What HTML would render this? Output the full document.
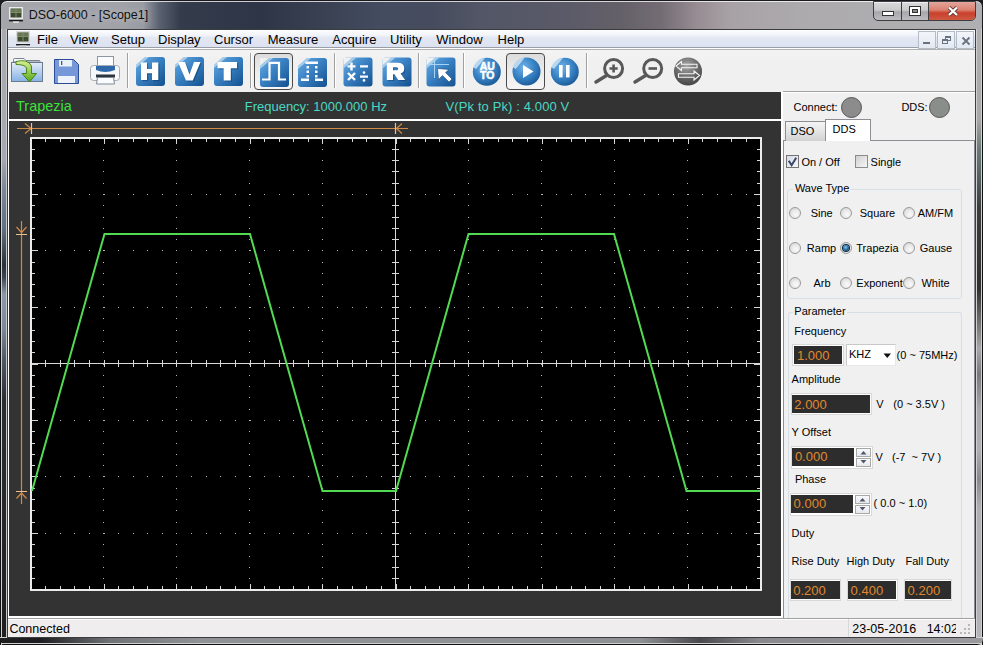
<!DOCTYPE html>
<html><head><meta charset="utf-8">
<style>
*{box-sizing:border-box;margin:0;padding:0}
html,body{width:983px;height:645px;overflow:hidden;background:#1c1e24}
body{position:relative;font-family:"Liberation Sans",sans-serif;color:#000}
.a{position:absolute}
.t{position:absolute;white-space:nowrap;line-height:1}
#frame{left:0;top:0;width:983px;height:645px;border-radius:7px 7px 0 0;border:1px solid #1a1a1e;box-shadow:inset 0 1px rgba(255,255,255,.75);
 background:linear-gradient(to right,#a4a6ac 0,#a0a2a8 120px,#9a9ca4 142px,#5a6272 158px,#343c4c 180px,#2e3546 260px,#3a4254 330px,#444c60 380px,#464c5e 430px,#525666 480px,#5a5a68 560px,#646068 620px,#746c74 660px,#968c92 695px,#a8a2a6 730px,#acaaac 800px,#b0b0b2 983px)}
#frameL{left:0;top:29px;width:8px;height:616px;border-left:1px solid #101010;background:linear-gradient(to right,#d0d0d2 0,#d0d0d2 1px,transparent 1px,transparent 5px,#c8c8ca 5px,#c8c8ca 6px,#202020 6px),linear-gradient(to bottom,#a8acb2 0,#a4a8b0 130px,#7a8898 160px,#607080 200px,#2a323a 236px,#3a4450 248px,#8a98a8 265px,#7a8898 300px,#505a66 330px,#2a2e34 370px,#1e1e20 616px)}
#frameR{left:975px;top:29px;width:8px;height:616px;background:linear-gradient(to right,#303030 0,#303030 1px,#d0d0d0 1px,#d0d0d0 2px,transparent 2px,transparent 6px,#d0d0d0 6px,#d0d0d0 7px,#101010 7px),linear-gradient(to bottom,#b0b0b2 0,#a8a8aa 90px,#6a7a78 120px,#5a6a68 140px,#3a3c3e 180px,#2e3032 260px,#6a6a6c 290px,#a8a8ac 320px,#7a7a7e 345px,#a8a8ac 380px,#b0b0b4 420px,#8a8a8e 450px,#b0b0b4 480px,#b4b4b8 616px)}
#frameB{left:0;top:637px;width:983px;height:8px;border-radius:0 0 6px 6px;background:linear-gradient(to bottom,#d0d0d0 0,#d0d0d0 1px,transparent 1px,transparent 6px,#d0d0d0 6px,#d0d0d0 7px,#101010 7px),linear-gradient(to right,#1e1e20 0,#1e1e20 40px,#707276 110px,#909296 200px,#8e9094 640px,#4a4a4e 700px,#8a8a8e 760px,#9a9a9e 983px)}
#client{left:7px;top:29px;width:969px;height:609px;background:#f0f0f0;border:1px solid #3c3c3c}
#menubar{left:8px;top:30px;width:967px;height:18px;background:linear-gradient(to bottom,#fcfdfe 0,#f2f4fa 30%,#e2e7f2 45%,#dce2f0 100%);border-bottom:1px solid #9a9ea6}
#toolbar{left:8px;top:48px;width:967px;height:44px;background:linear-gradient(#f4f4f4,#f0f0f0 30%);border-top:1px solid #fff;box-shadow:inset 0 1px #b0b0b0}

#scope{left:8px;top:92px;width:775px;height:526px;background:#fff}
#shead{left:9px;top:92px;width:772px;height:27px;background:#333}
#spanel{left:9px;top:121px;width:772px;height:495px;background:#333}
#rpanel{left:783px;top:91px;width:192px;height:527px;background:#f0f0f0;border-top:1px solid #a0a0a0}
#rpanel2{left:783px;top:92px;width:192px;height:1px;background:#fff}
#status{left:8px;top:618px;width:967px;height:19px;background:#efeded;border-top:1px solid #a0a0a0;box-shadow:inset 0 1px #fff}
</style></head><body>
<div class="a" id="frame"></div>
<div class="a" id="frameL"></div>
<div class="a" id="frameR"></div>
<div class="a" id="frameB"></div>
<div class="a" id="client"></div>
<div class="a" id="menubar"></div>
<div class="a" id="toolbar"></div>
<div class="a" id="scope"></div>
<div class="a" id="shead"></div>
<div class="a" id="spanel"></div>
<div class="a" id="rpanel"></div>
<div class="a" id="rpanel2"></div>
<div class="a" id="status"></div>
<svg class="a" style="left:0;top:0" width="983" height="645" viewBox="0 0 983 645" shape-rendering="crispEdges">
<rect x="32" y="139" width="728" height="450" fill="#000"/>
<path fill="#b8b8b8" d="M103 149h1v1h-1zM103 160h1v1h-1zM103 171h1v1h-1zM103 183h1v1h-1zM103 194h1v1h-1zM103 205h1v1h-1zM103 217h1v1h-1zM103 228h1v1h-1zM103 239h1v1h-1zM103 250h1v1h-1zM103 262h1v1h-1zM103 273h1v1h-1zM103 284h1v1h-1zM103 296h1v1h-1zM103 307h1v1h-1zM103 318h1v1h-1zM103 330h1v1h-1zM103 341h1v1h-1zM103 352h1v1h-1zM103 364h1v1h-1zM103 375h1v1h-1zM103 386h1v1h-1zM103 397h1v1h-1zM103 409h1v1h-1zM103 420h1v1h-1zM103 431h1v1h-1zM103 443h1v1h-1zM103 454h1v1h-1zM103 465h1v1h-1zM103 476h1v1h-1zM103 488h1v1h-1zM103 499h1v1h-1zM103 510h1v1h-1zM103 522h1v1h-1zM103 533h1v1h-1zM103 544h1v1h-1zM103 556h1v1h-1zM103 567h1v1h-1zM103 578h1v1h-1zM176 149h1v1h-1zM176 160h1v1h-1zM176 171h1v1h-1zM176 183h1v1h-1zM176 194h1v1h-1zM176 205h1v1h-1zM176 217h1v1h-1zM176 228h1v1h-1zM176 239h1v1h-1zM176 250h1v1h-1zM176 262h1v1h-1zM176 273h1v1h-1zM176 284h1v1h-1zM176 296h1v1h-1zM176 307h1v1h-1zM176 318h1v1h-1zM176 330h1v1h-1zM176 341h1v1h-1zM176 352h1v1h-1zM176 364h1v1h-1zM176 375h1v1h-1zM176 386h1v1h-1zM176 397h1v1h-1zM176 409h1v1h-1zM176 420h1v1h-1zM176 431h1v1h-1zM176 443h1v1h-1zM176 454h1v1h-1zM176 465h1v1h-1zM176 476h1v1h-1zM176 488h1v1h-1zM176 499h1v1h-1zM176 510h1v1h-1zM176 522h1v1h-1zM176 533h1v1h-1zM176 544h1v1h-1zM176 556h1v1h-1zM176 567h1v1h-1zM176 578h1v1h-1zM249 149h1v1h-1zM249 160h1v1h-1zM249 171h1v1h-1zM249 183h1v1h-1zM249 194h1v1h-1zM249 205h1v1h-1zM249 217h1v1h-1zM249 228h1v1h-1zM249 239h1v1h-1zM249 250h1v1h-1zM249 262h1v1h-1zM249 273h1v1h-1zM249 284h1v1h-1zM249 296h1v1h-1zM249 307h1v1h-1zM249 318h1v1h-1zM249 330h1v1h-1zM249 341h1v1h-1zM249 352h1v1h-1zM249 364h1v1h-1zM249 375h1v1h-1zM249 386h1v1h-1zM249 397h1v1h-1zM249 409h1v1h-1zM249 420h1v1h-1zM249 431h1v1h-1zM249 443h1v1h-1zM249 454h1v1h-1zM249 465h1v1h-1zM249 476h1v1h-1zM249 488h1v1h-1zM249 499h1v1h-1zM249 510h1v1h-1zM249 522h1v1h-1zM249 533h1v1h-1zM249 544h1v1h-1zM249 556h1v1h-1zM249 567h1v1h-1zM249 578h1v1h-1zM322 149h1v1h-1zM322 160h1v1h-1zM322 171h1v1h-1zM322 183h1v1h-1zM322 194h1v1h-1zM322 205h1v1h-1zM322 217h1v1h-1zM322 228h1v1h-1zM322 239h1v1h-1zM322 250h1v1h-1zM322 262h1v1h-1zM322 273h1v1h-1zM322 284h1v1h-1zM322 296h1v1h-1zM322 307h1v1h-1zM322 318h1v1h-1zM322 330h1v1h-1zM322 341h1v1h-1zM322 352h1v1h-1zM322 364h1v1h-1zM322 375h1v1h-1zM322 386h1v1h-1zM322 397h1v1h-1zM322 409h1v1h-1zM322 420h1v1h-1zM322 431h1v1h-1zM322 443h1v1h-1zM322 454h1v1h-1zM322 465h1v1h-1zM322 476h1v1h-1zM322 488h1v1h-1zM322 499h1v1h-1zM322 510h1v1h-1zM322 522h1v1h-1zM322 533h1v1h-1zM322 544h1v1h-1zM322 556h1v1h-1zM322 567h1v1h-1zM322 578h1v1h-1zM468 149h1v1h-1zM468 160h1v1h-1zM468 171h1v1h-1zM468 183h1v1h-1zM468 194h1v1h-1zM468 205h1v1h-1zM468 217h1v1h-1zM468 228h1v1h-1zM468 239h1v1h-1zM468 250h1v1h-1zM468 262h1v1h-1zM468 273h1v1h-1zM468 284h1v1h-1zM468 296h1v1h-1zM468 307h1v1h-1zM468 318h1v1h-1zM468 330h1v1h-1zM468 341h1v1h-1zM468 352h1v1h-1zM468 364h1v1h-1zM468 375h1v1h-1zM468 386h1v1h-1zM468 397h1v1h-1zM468 409h1v1h-1zM468 420h1v1h-1zM468 431h1v1h-1zM468 443h1v1h-1zM468 454h1v1h-1zM468 465h1v1h-1zM468 476h1v1h-1zM468 488h1v1h-1zM468 499h1v1h-1zM468 510h1v1h-1zM468 522h1v1h-1zM468 533h1v1h-1zM468 544h1v1h-1zM468 556h1v1h-1zM468 567h1v1h-1zM468 578h1v1h-1zM541 149h1v1h-1zM541 160h1v1h-1zM541 171h1v1h-1zM541 183h1v1h-1zM541 194h1v1h-1zM541 205h1v1h-1zM541 217h1v1h-1zM541 228h1v1h-1zM541 239h1v1h-1zM541 250h1v1h-1zM541 262h1v1h-1zM541 273h1v1h-1zM541 284h1v1h-1zM541 296h1v1h-1zM541 307h1v1h-1zM541 318h1v1h-1zM541 330h1v1h-1zM541 341h1v1h-1zM541 352h1v1h-1zM541 364h1v1h-1zM541 375h1v1h-1zM541 386h1v1h-1zM541 397h1v1h-1zM541 409h1v1h-1zM541 420h1v1h-1zM541 431h1v1h-1zM541 443h1v1h-1zM541 454h1v1h-1zM541 465h1v1h-1zM541 476h1v1h-1zM541 488h1v1h-1zM541 499h1v1h-1zM541 510h1v1h-1zM541 522h1v1h-1zM541 533h1v1h-1zM541 544h1v1h-1zM541 556h1v1h-1zM541 567h1v1h-1zM541 578h1v1h-1zM614 149h1v1h-1zM614 160h1v1h-1zM614 171h1v1h-1zM614 183h1v1h-1zM614 194h1v1h-1zM614 205h1v1h-1zM614 217h1v1h-1zM614 228h1v1h-1zM614 239h1v1h-1zM614 250h1v1h-1zM614 262h1v1h-1zM614 273h1v1h-1zM614 284h1v1h-1zM614 296h1v1h-1zM614 307h1v1h-1zM614 318h1v1h-1zM614 330h1v1h-1zM614 341h1v1h-1zM614 352h1v1h-1zM614 364h1v1h-1zM614 375h1v1h-1zM614 386h1v1h-1zM614 397h1v1h-1zM614 409h1v1h-1zM614 420h1v1h-1zM614 431h1v1h-1zM614 443h1v1h-1zM614 454h1v1h-1zM614 465h1v1h-1zM614 476h1v1h-1zM614 488h1v1h-1zM614 499h1v1h-1zM614 510h1v1h-1zM614 522h1v1h-1zM614 533h1v1h-1zM614 544h1v1h-1zM614 556h1v1h-1zM614 567h1v1h-1zM614 578h1v1h-1zM687 149h1v1h-1zM687 160h1v1h-1zM687 171h1v1h-1zM687 183h1v1h-1zM687 194h1v1h-1zM687 205h1v1h-1zM687 217h1v1h-1zM687 228h1v1h-1zM687 239h1v1h-1zM687 250h1v1h-1zM687 262h1v1h-1zM687 273h1v1h-1zM687 284h1v1h-1zM687 296h1v1h-1zM687 307h1v1h-1zM687 318h1v1h-1zM687 330h1v1h-1zM687 341h1v1h-1zM687 352h1v1h-1zM687 364h1v1h-1zM687 375h1v1h-1zM687 386h1v1h-1zM687 397h1v1h-1zM687 409h1v1h-1zM687 420h1v1h-1zM687 431h1v1h-1zM687 443h1v1h-1zM687 454h1v1h-1zM687 465h1v1h-1zM687 476h1v1h-1zM687 488h1v1h-1zM687 499h1v1h-1zM687 510h1v1h-1zM687 522h1v1h-1zM687 533h1v1h-1zM687 544h1v1h-1zM687 556h1v1h-1zM687 567h1v1h-1zM687 578h1v1h-1zM45 194h1v1h-1zM60 194h1v1h-1zM74 194h1v1h-1zM89 194h1v1h-1zM104 194h1v1h-1zM118 194h1v1h-1zM133 194h1v1h-1zM147 194h1v1h-1zM162 194h1v1h-1zM176 194h1v1h-1zM191 194h1v1h-1zM206 194h1v1h-1zM220 194h1v1h-1zM235 194h1v1h-1zM250 194h1v1h-1zM264 194h1v1h-1zM279 194h1v1h-1zM293 194h1v1h-1zM308 194h1v1h-1zM322 194h1v1h-1zM337 194h1v1h-1zM352 194h1v1h-1zM366 194h1v1h-1zM381 194h1v1h-1zM396 194h1v1h-1zM410 194h1v1h-1zM425 194h1v1h-1zM439 194h1v1h-1zM454 194h1v1h-1zM468 194h1v1h-1zM483 194h1v1h-1zM498 194h1v1h-1zM512 194h1v1h-1zM527 194h1v1h-1zM542 194h1v1h-1zM556 194h1v1h-1zM571 194h1v1h-1zM585 194h1v1h-1zM600 194h1v1h-1zM614 194h1v1h-1zM629 194h1v1h-1zM644 194h1v1h-1zM658 194h1v1h-1zM673 194h1v1h-1zM688 194h1v1h-1zM702 194h1v1h-1zM717 194h1v1h-1zM731 194h1v1h-1zM746 194h1v1h-1zM45 250h1v1h-1zM60 250h1v1h-1zM74 250h1v1h-1zM89 250h1v1h-1zM104 250h1v1h-1zM118 250h1v1h-1zM133 250h1v1h-1zM147 250h1v1h-1zM162 250h1v1h-1zM176 250h1v1h-1zM191 250h1v1h-1zM206 250h1v1h-1zM220 250h1v1h-1zM235 250h1v1h-1zM250 250h1v1h-1zM264 250h1v1h-1zM279 250h1v1h-1zM293 250h1v1h-1zM308 250h1v1h-1zM322 250h1v1h-1zM337 250h1v1h-1zM352 250h1v1h-1zM366 250h1v1h-1zM381 250h1v1h-1zM396 250h1v1h-1zM410 250h1v1h-1zM425 250h1v1h-1zM439 250h1v1h-1zM454 250h1v1h-1zM468 250h1v1h-1zM483 250h1v1h-1zM498 250h1v1h-1zM512 250h1v1h-1zM527 250h1v1h-1zM542 250h1v1h-1zM556 250h1v1h-1zM571 250h1v1h-1zM585 250h1v1h-1zM600 250h1v1h-1zM614 250h1v1h-1zM629 250h1v1h-1zM644 250h1v1h-1zM658 250h1v1h-1zM673 250h1v1h-1zM688 250h1v1h-1zM702 250h1v1h-1zM717 250h1v1h-1zM731 250h1v1h-1zM746 250h1v1h-1zM45 307h1v1h-1zM60 307h1v1h-1zM74 307h1v1h-1zM89 307h1v1h-1zM104 307h1v1h-1zM118 307h1v1h-1zM133 307h1v1h-1zM147 307h1v1h-1zM162 307h1v1h-1zM176 307h1v1h-1zM191 307h1v1h-1zM206 307h1v1h-1zM220 307h1v1h-1zM235 307h1v1h-1zM250 307h1v1h-1zM264 307h1v1h-1zM279 307h1v1h-1zM293 307h1v1h-1zM308 307h1v1h-1zM322 307h1v1h-1zM337 307h1v1h-1zM352 307h1v1h-1zM366 307h1v1h-1zM381 307h1v1h-1zM396 307h1v1h-1zM410 307h1v1h-1zM425 307h1v1h-1zM439 307h1v1h-1zM454 307h1v1h-1zM468 307h1v1h-1zM483 307h1v1h-1zM498 307h1v1h-1zM512 307h1v1h-1zM527 307h1v1h-1zM542 307h1v1h-1zM556 307h1v1h-1zM571 307h1v1h-1zM585 307h1v1h-1zM600 307h1v1h-1zM614 307h1v1h-1zM629 307h1v1h-1zM644 307h1v1h-1zM658 307h1v1h-1zM673 307h1v1h-1zM688 307h1v1h-1zM702 307h1v1h-1zM717 307h1v1h-1zM731 307h1v1h-1zM746 307h1v1h-1zM45 420h1v1h-1zM60 420h1v1h-1zM74 420h1v1h-1zM89 420h1v1h-1zM104 420h1v1h-1zM118 420h1v1h-1zM133 420h1v1h-1zM147 420h1v1h-1zM162 420h1v1h-1zM176 420h1v1h-1zM191 420h1v1h-1zM206 420h1v1h-1zM220 420h1v1h-1zM235 420h1v1h-1zM250 420h1v1h-1zM264 420h1v1h-1zM279 420h1v1h-1zM293 420h1v1h-1zM308 420h1v1h-1zM322 420h1v1h-1zM337 420h1v1h-1zM352 420h1v1h-1zM366 420h1v1h-1zM381 420h1v1h-1zM396 420h1v1h-1zM410 420h1v1h-1zM425 420h1v1h-1zM439 420h1v1h-1zM454 420h1v1h-1zM468 420h1v1h-1zM483 420h1v1h-1zM498 420h1v1h-1zM512 420h1v1h-1zM527 420h1v1h-1zM542 420h1v1h-1zM556 420h1v1h-1zM571 420h1v1h-1zM585 420h1v1h-1zM600 420h1v1h-1zM614 420h1v1h-1zM629 420h1v1h-1zM644 420h1v1h-1zM658 420h1v1h-1zM673 420h1v1h-1zM688 420h1v1h-1zM702 420h1v1h-1zM717 420h1v1h-1zM731 420h1v1h-1zM746 420h1v1h-1zM45 476h1v1h-1zM60 476h1v1h-1zM74 476h1v1h-1zM89 476h1v1h-1zM104 476h1v1h-1zM118 476h1v1h-1zM133 476h1v1h-1zM147 476h1v1h-1zM162 476h1v1h-1zM176 476h1v1h-1zM191 476h1v1h-1zM206 476h1v1h-1zM220 476h1v1h-1zM235 476h1v1h-1zM250 476h1v1h-1zM264 476h1v1h-1zM279 476h1v1h-1zM293 476h1v1h-1zM308 476h1v1h-1zM322 476h1v1h-1zM337 476h1v1h-1zM352 476h1v1h-1zM366 476h1v1h-1zM381 476h1v1h-1zM396 476h1v1h-1zM410 476h1v1h-1zM425 476h1v1h-1zM439 476h1v1h-1zM454 476h1v1h-1zM468 476h1v1h-1zM483 476h1v1h-1zM498 476h1v1h-1zM512 476h1v1h-1zM527 476h1v1h-1zM542 476h1v1h-1zM556 476h1v1h-1zM571 476h1v1h-1zM585 476h1v1h-1zM600 476h1v1h-1zM614 476h1v1h-1zM629 476h1v1h-1zM644 476h1v1h-1zM658 476h1v1h-1zM673 476h1v1h-1zM688 476h1v1h-1zM702 476h1v1h-1zM717 476h1v1h-1zM731 476h1v1h-1zM746 476h1v1h-1zM45 533h1v1h-1zM60 533h1v1h-1zM74 533h1v1h-1zM89 533h1v1h-1zM104 533h1v1h-1zM118 533h1v1h-1zM133 533h1v1h-1zM147 533h1v1h-1zM162 533h1v1h-1zM176 533h1v1h-1zM191 533h1v1h-1zM206 533h1v1h-1zM220 533h1v1h-1zM235 533h1v1h-1zM250 533h1v1h-1zM264 533h1v1h-1zM279 533h1v1h-1zM293 533h1v1h-1zM308 533h1v1h-1zM322 533h1v1h-1zM337 533h1v1h-1zM352 533h1v1h-1zM366 533h1v1h-1zM381 533h1v1h-1zM396 533h1v1h-1zM410 533h1v1h-1zM425 533h1v1h-1zM439 533h1v1h-1zM454 533h1v1h-1zM468 533h1v1h-1zM483 533h1v1h-1zM498 533h1v1h-1zM512 533h1v1h-1zM527 533h1v1h-1zM542 533h1v1h-1zM556 533h1v1h-1zM571 533h1v1h-1zM585 533h1v1h-1zM600 533h1v1h-1zM614 533h1v1h-1zM629 533h1v1h-1zM644 533h1v1h-1zM658 533h1v1h-1zM673 533h1v1h-1zM688 533h1v1h-1zM702 533h1v1h-1zM717 533h1v1h-1zM731 533h1v1h-1zM746 533h1v1h-1z"/>
<path fill="#d8d8d8" d="M395 139h1v450h-1zM32 363h728v1h-728zM392 149h7v1h-7zM392 160h7v1h-7zM392 171h7v1h-7zM392 183h7v1h-7zM392 194h7v1h-7zM392 205h7v1h-7zM392 217h7v1h-7zM392 228h7v1h-7zM392 239h7v1h-7zM392 250h7v1h-7zM392 262h7v1h-7zM392 273h7v1h-7zM392 284h7v1h-7zM392 296h7v1h-7zM392 307h7v1h-7zM392 318h7v1h-7zM392 330h7v1h-7zM392 341h7v1h-7zM392 352h7v1h-7zM392 375h7v1h-7zM392 386h7v1h-7zM392 397h7v1h-7zM392 409h7v1h-7zM392 420h7v1h-7zM392 431h7v1h-7zM392 443h7v1h-7zM392 454h7v1h-7zM392 465h7v1h-7zM392 476h7v1h-7zM392 488h7v1h-7zM392 499h7v1h-7zM392 510h7v1h-7zM392 522h7v1h-7zM392 533h7v1h-7zM392 544h7v1h-7zM392 556h7v1h-7zM392 567h7v1h-7zM392 578h7v1h-7zM45 360h1v7h-1zM60 360h1v7h-1zM74 360h1v7h-1zM89 360h1v7h-1zM104 360h1v7h-1zM118 360h1v7h-1zM133 360h1v7h-1zM147 360h1v7h-1zM162 360h1v7h-1zM176 360h1v7h-1zM191 360h1v7h-1zM206 360h1v7h-1zM220 360h1v7h-1zM235 360h1v7h-1zM250 360h1v7h-1zM264 360h1v7h-1zM279 360h1v7h-1zM293 360h1v7h-1zM308 360h1v7h-1zM322 360h1v7h-1zM337 360h1v7h-1zM352 360h1v7h-1zM366 360h1v7h-1zM381 360h1v7h-1zM410 360h1v7h-1zM425 360h1v7h-1zM439 360h1v7h-1zM454 360h1v7h-1zM468 360h1v7h-1zM483 360h1v7h-1zM498 360h1v7h-1zM512 360h1v7h-1zM527 360h1v7h-1zM542 360h1v7h-1zM556 360h1v7h-1zM571 360h1v7h-1zM585 360h1v7h-1zM600 360h1v7h-1zM614 360h1v7h-1zM629 360h1v7h-1zM644 360h1v7h-1zM658 360h1v7h-1zM673 360h1v7h-1zM688 360h1v7h-1zM702 360h1v7h-1zM717 360h1v7h-1zM731 360h1v7h-1zM746 360h1v7h-1zM45 139h1v3h-1zM45 586h1v3h-1zM60 139h1v3h-1zM60 586h1v3h-1zM74 139h1v3h-1zM74 586h1v3h-1zM89 139h1v3h-1zM89 586h1v3h-1zM104 139h1v5h-1zM104 584h1v5h-1zM118 139h1v3h-1zM118 586h1v3h-1zM133 139h1v3h-1zM133 586h1v3h-1zM147 139h1v3h-1zM147 586h1v3h-1zM162 139h1v3h-1zM162 586h1v3h-1zM176 139h1v5h-1zM176 584h1v5h-1zM191 139h1v3h-1zM191 586h1v3h-1zM206 139h1v3h-1zM206 586h1v3h-1zM220 139h1v3h-1zM220 586h1v3h-1zM235 139h1v3h-1zM235 586h1v3h-1zM250 139h1v5h-1zM250 584h1v5h-1zM264 139h1v3h-1zM264 586h1v3h-1zM279 139h1v3h-1zM279 586h1v3h-1zM293 139h1v3h-1zM293 586h1v3h-1zM308 139h1v3h-1zM308 586h1v3h-1zM322 139h1v5h-1zM322 584h1v5h-1zM337 139h1v3h-1zM337 586h1v3h-1zM352 139h1v3h-1zM352 586h1v3h-1zM366 139h1v3h-1zM366 586h1v3h-1zM381 139h1v3h-1zM381 586h1v3h-1zM396 139h1v5h-1zM396 584h1v5h-1zM410 139h1v3h-1zM410 586h1v3h-1zM425 139h1v3h-1zM425 586h1v3h-1zM439 139h1v3h-1zM439 586h1v3h-1zM454 139h1v3h-1zM454 586h1v3h-1zM468 139h1v5h-1zM468 584h1v5h-1zM483 139h1v3h-1zM483 586h1v3h-1zM498 139h1v3h-1zM498 586h1v3h-1zM512 139h1v3h-1zM512 586h1v3h-1zM527 139h1v3h-1zM527 586h1v3h-1zM542 139h1v5h-1zM542 584h1v5h-1zM556 139h1v3h-1zM556 586h1v3h-1zM571 139h1v3h-1zM571 586h1v3h-1zM585 139h1v3h-1zM585 586h1v3h-1zM600 139h1v3h-1zM600 586h1v3h-1zM614 139h1v5h-1zM614 584h1v5h-1zM629 139h1v3h-1zM629 586h1v3h-1zM644 139h1v3h-1zM644 586h1v3h-1zM658 139h1v3h-1zM658 586h1v3h-1zM673 139h1v3h-1zM673 586h1v3h-1zM688 139h1v5h-1zM688 584h1v5h-1zM702 139h1v3h-1zM702 586h1v3h-1zM717 139h1v3h-1zM717 586h1v3h-1zM731 139h1v3h-1zM731 586h1v3h-1zM746 139h1v3h-1zM746 586h1v3h-1zM32 149h3v1h-3zM757 149h3v1h-3zM32 160h3v1h-3zM757 160h3v1h-3zM32 171h3v1h-3zM757 171h3v1h-3zM32 183h3v1h-3zM757 183h3v1h-3zM32 194h6v1h-6zM754 194h6v1h-6zM32 205h3v1h-3zM757 205h3v1h-3zM32 217h3v1h-3zM757 217h3v1h-3zM32 228h3v1h-3zM757 228h3v1h-3zM32 239h3v1h-3zM757 239h3v1h-3zM32 250h6v1h-6zM754 250h6v1h-6zM32 262h3v1h-3zM757 262h3v1h-3zM32 273h3v1h-3zM757 273h3v1h-3zM32 284h3v1h-3zM757 284h3v1h-3zM32 296h3v1h-3zM757 296h3v1h-3zM32 307h6v1h-6zM754 307h6v1h-6zM32 318h3v1h-3zM757 318h3v1h-3zM32 330h3v1h-3zM757 330h3v1h-3zM32 341h3v1h-3zM757 341h3v1h-3zM32 352h3v1h-3zM757 352h3v1h-3zM32 364h6v1h-6zM754 364h6v1h-6zM32 375h3v1h-3zM757 375h3v1h-3zM32 386h3v1h-3zM757 386h3v1h-3zM32 397h3v1h-3zM757 397h3v1h-3zM32 409h3v1h-3zM757 409h3v1h-3zM32 420h6v1h-6zM754 420h6v1h-6zM32 431h3v1h-3zM757 431h3v1h-3zM32 443h3v1h-3zM757 443h3v1h-3zM32 454h3v1h-3zM757 454h3v1h-3zM32 465h3v1h-3zM757 465h3v1h-3zM32 476h6v1h-6zM754 476h6v1h-6zM32 488h3v1h-3zM757 488h3v1h-3zM32 499h3v1h-3zM757 499h3v1h-3zM32 510h3v1h-3zM757 510h3v1h-3zM32 522h3v1h-3zM757 522h3v1h-3zM32 533h6v1h-6zM754 533h6v1h-6zM32 544h3v1h-3zM757 544h3v1h-3zM32 556h3v1h-3zM757 556h3v1h-3zM32 567h3v1h-3zM757 567h3v1h-3zM32 578h3v1h-3zM757 578h3v1h-3z"/>
<path fill="#ececec" d="M30 137h732v2h-732zM30 589h732v2h-732zM30 137h2v454h-2zM760 137h2v454h-2z"/>
<polyline shape-rendering="auto" fill="none" stroke="#52da52" stroke-width="2" stroke-linejoin="miter" points="32,491 104.5,234 250,234 322.5,491 396,491 468.5,234 614,234 686.5,491 760,491"/>
<g shape-rendering="auto" stroke="#d08a48" stroke-width="1.2" fill="none">
<path d="M17 128.5H408"/>
<path d="M25 123.5L31 128.5L25 133.5M402 123.5L396.5 128.5L402 133.5"/>
<path d="M21.5 221V504"/>
<path d="M16.5 227L21.5 232.5L26.5 227M16.5 498.5L21.5 493L26.5 498.5"/>
<path stroke="#f0c090" d="M31.5 123V134M395.5 123V134M16 234.5H27M16 491.5H27"/>
</g>
</svg>
<!-- right panel widgets -->
<div class="a" style="left:841px;top:97px;width:21px;height:21px;border-radius:50%;background:#8c8c8c;border:1px solid #555"></div>
<div class="a" style="left:929px;top:97px;width:21px;height:21px;border-radius:50%;background:#8a8e8a;border:1px solid #555"></div>
<!-- tab panel -->
<div class="a" style="left:783px;top:140px;width:192px;height:478px;border:1px solid #8c8e94;border-bottom:none;background:#f0f0f0"></div>
<div class="a" style="left:785px;top:121px;width:41px;height:20px;border:1px solid #8c8e94;border-bottom:none;background:linear-gradient(#f4f4f4,#e6e6e6 45%,#d2d2d2)"></div>
<div class="a" style="left:825px;top:119px;width:46px;height:22px;border:1px solid #8c8e94;border-bottom:none;background:#fff"></div>
<!-- checkboxes -->
<div class="a" style="left:786px;top:155px;width:13px;height:13px;border:1px solid #747474;background:linear-gradient(135deg,#d6dbe6,#f4f6fa)"></div>
<svg class="a" style="left:786px;top:155px" width="13" height="13"><path d="M2.8 5.8L5.6 10.2L10.2 2.8" fill="none" stroke="#3a4466" stroke-width="2"/></svg>
<div class="a" style="left:855px;top:155px;width:13px;height:13px;border:1px solid #8c8c8c;background:linear-gradient(135deg,#d0d0d0,#f6f6f6)"></div>
<!-- group boxes -->
<div class="a" style="left:787px;top:189px;width:175px;height:110px;border:1px solid #d5dfe5;border-radius:3px"></div>
<div class="a" style="left:793px;top:186px;width:58px;height:6px;background:#f0f0f0"></div>
<div class="a" style="left:788px;top:312px;width:174px;height:306px;border:1px solid #d5dfe5;border-bottom:none;border-radius:3px 3px 0 0"></div>
<div class="a" style="left:793px;top:309px;width:54px;height:6px;background:#f0f0f0"></div>
<!-- radios -->
<style>
.rd{position:absolute;width:12px;height:12px;border-radius:50%;border:1px solid #9a9a9a;background:radial-gradient(circle at 60% 65%,#fafafa 0,#e8e8e8 50%,#c8c8c8 100%)}
.dk{position:absolute;background:#2d2d2d;border-top:1px solid #9c9c9c;border-left:1px solid #9c9c9c;box-shadow:0 0 0 1px #fff}
.box{position:absolute;background:#fff;border:1px solid #d8d8d8}
.sp{position:absolute;width:15px;height:9px;border:1px solid #a8a8a8;background:linear-gradient(#fafafc,#e6e8ee)}
</style>
<div class="rd" style="left:789px;top:207px"></div>
<div class="rd" style="left:840px;top:207px"></div>
<div class="rd" style="left:903px;top:207px"></div>
<div class="rd" style="left:789px;top:242px"></div>
<div class="rd" style="left:840px;top:242px"></div>
<div class="rd" style="left:903px;top:242px"></div>
<div class="rd" style="left:789px;top:277px"></div>
<div class="rd" style="left:840px;top:277px"></div>
<div class="rd" style="left:903px;top:277px"></div>
<div class="a" style="left:843px;top:245px;width:6px;height:6px;border-radius:50%;background:radial-gradient(circle at 45% 40%,#8ccbe8 0,#2a78a8 45%,#0a2e4c 80%);box-shadow:0 0 0 1px #0a2a44"></div>
<!-- inputs -->
<div class="box" style="left:792px;top:344px;width:52px;height:22px"></div>
<div class="a" style="left:794px;top:346px;width:48px;height:18px;background:#2d2d2d"></div>
<div class="box" style="left:846px;top:344px;width:50px;height:22px;border-color:#c8c8c8 #e8e8e8 #e8e8e8 #c8c8c8"></div>
<svg class="a" style="left:883px;top:353px" width="9" height="6"><path d="M0.5 0.5H8L4.25 5z" fill="#111"/></svg>
<div class="box" style="left:791px;top:393px;width:81px;height:22px"></div>
<div class="a" style="left:792px;top:395px;width:78px;height:18px;background:#2d2d2d"></div>
<div class="box" style="left:791px;top:446px;width:82px;height:23px"></div>
<div class="a" style="left:792px;top:448px;width:62px;height:18px;background:#2d2d2d"></div>
<div class="sp" style="left:856px;top:448px"></div>
<div class="sp" style="left:856px;top:458px"></div>
<svg class="a" style="left:856px;top:448px" width="15" height="19"><path d="M4.5 6.5H10.5L7.5 3z M4.5 12H10.5L7.5 15.5z" fill="#505868"/></svg>
<div class="box" style="left:790px;top:493px;width:82px;height:23px"></div>
<div class="a" style="left:791px;top:495px;width:62px;height:18px;background:#2d2d2d"></div>
<div class="sp" style="left:855px;top:495px"></div>
<div class="sp" style="left:855px;top:505px"></div>
<svg class="a" style="left:855px;top:495px" width="15" height="19"><path d="M4.5 6.5H10.5L7.5 3z M4.5 12H10.5L7.5 15.5z" fill="#505868"/></svg>
<div class="box" style="left:790px;top:579px;width:51px;height:22px"></div>
<div class="a" style="left:791px;top:581px;width:49px;height:18px;background:#2d2d2d"></div>
<div class="box" style="left:847px;top:579px;width:51px;height:22px"></div>
<div class="a" style="left:848px;top:581px;width:48px;height:18px;background:#2d2d2d"></div>
<div class="box" style="left:904px;top:579px;width:48px;height:22px"></div>
<div class="a" style="left:905px;top:581px;width:46px;height:18px;background:#2d2d2d"></div>
<!-- status bar separator -->
<div class="a" style="left:848px;top:619px;width:1px;height:18px;background:#d8d8d8"></div>
<!-- ===== toolbar ===== -->
<svg class="a" style="left:0;top:0" width="983" height="95" viewBox="0 0 983 95">
<defs>
 <linearGradient id="gBlue" x1="0" y1="0" x2="1" y2="1">
  <stop offset="0" stop-color="#6aaee6"/><stop offset="0.45" stop-color="#3a82c4"/><stop offset="1" stop-color="#14508e"/>
 </linearGradient>
 <radialGradient id="gBall" cx="0.4" cy="0.35" r="0.75">
  <stop offset="0" stop-color="#6fb2e8"/><stop offset="0.55" stop-color="#3580c2"/><stop offset="1" stop-color="#15508c"/>
 </radialGradient>
 <radialGradient id="gGray" cx="0.45" cy="0.3" r="0.8">
  <stop offset="0" stop-color="#a8a8a8"/><stop offset="0.5" stop-color="#6a6a6a"/><stop offset="1" stop-color="#3a3a3a"/>
 </radialGradient>
 <linearGradient id="gFold" x1="0" y1="0" x2="1" y2="1">
  <stop offset="0" stop-color="#ffffff" stop-opacity="0.95"/><stop offset="1" stop-color="#b8d6f0" stop-opacity="0.9"/>
 </linearGradient>
 <linearGradient id="gFolder" x1="0" y1="0" x2="0" y2="1">
  <stop offset="0" stop-color="#e4ecf8"/><stop offset="1" stop-color="#86b2e6"/>
 </linearGradient>
 <linearGradient id="gArrow" x1="0" y1="0" x2="0" y2="1">
  <stop offset="0" stop-color="#d8f090"/><stop offset="1" stop-color="#58a818"/>
 </linearGradient>
 <linearGradient id="gPress" x1="0" y1="0" x2="0" y2="1">
  <stop offset="0" stop-color="#dcdcdc"/><stop offset="0.5" stop-color="#ececec"/><stop offset="1" stop-color="#f6f6f6"/>
 </linearGradient>
 <g id="sq">
  <rect x="0" y="0" width="29" height="29" rx="3" fill="url(#gBlue)"/>
  <path d="M0 0H9L0 8z" fill="#f0f0f0"/>
  <path d="M0 8L9 0H13L0 11z" fill="#c8e0f4" opacity="0.7"/>
 </g>
</defs>
<!-- separators -->
<g fill="#a0a0a0"><rect x="127" y="53" width="1" height="35"/><rect x="250" y="53" width="1" height="35"/><rect x="334" y="53" width="1" height="35"/><rect x="418" y="53" width="1" height="35"/><rect x="463" y="53" width="1" height="35"/><rect x="586" y="53" width="1" height="35"/></g>
<g fill="#ffffff"><rect x="128" y="53" width="1" height="35"/><rect x="251" y="53" width="1" height="35"/><rect x="335" y="53" width="1" height="35"/><rect x="419" y="53" width="1" height="35"/><rect x="464" y="53" width="1" height="35"/><rect x="587" y="53" width="1" height="35"/></g>
<!-- pressed buttons -->
<rect x="254.5" y="53.5" width="38" height="36" rx="3.5" fill="url(#gPress)" stroke="#4a4a4a"/>
<rect x="506.5" y="53.5" width="38" height="36" rx="3.5" fill="url(#gPress)" stroke="#4a4a4a"/>
<!-- folder -->
<path d="M13.5 62V59.5Q13.5 58.5 14.5 58.5H24L26 60.5H39Q40 60.5 40 61.5V62z" fill="#f4f6f8" stroke="#7a8490"/>
<rect x="11.5" y="62.5" width="31" height="19" fill="url(#gFolder)" stroke="#6a7a8c"/>
<path d="M16 61.5Q28 58.5 31.5 66V73.5H36.5L29.5 82L22 73.5H26.5V68Q25 64.5 16 64.5z" fill="url(#gArrow)" stroke="#3c7a14" stroke-width="0.9"/>
<!-- floppy -->
<path d="M54.5 59.5H73.5L78.5 64.5V83.5H54.5z" fill="#7698d8" stroke="#2c4c98"/>
<rect x="59" y="60" width="13" height="6.5" fill="#e8f0fa"/>
<rect x="61" y="61" width="1.3" height="4" fill="#4a5a70"/>
<rect x="58" y="76" width="17" height="7" fill="#eef2fa"/>
<!-- printer -->
<rect x="97.5" y="56.5" width="16" height="10" fill="#fbfcfe" stroke="#8a96a4"/>
<rect x="90.5" y="65.5" width="29" height="15" rx="3" fill="#f6f8fa" stroke="#a4acb6"/>
<path d="M96 66H115V70Q105 74 96 70z" fill="#2e6aaa"/>
<rect x="96" y="74.5" width="19" height="3" fill="#2c3440"/>
<path d="M97.5 77.5H113.5L114.5 84H96.5z" fill="#fafcfe" stroke="#7e8a98"/>
<!-- H V T -->
<use href="#sq" x="136" y="57"/>
<use href="#sq" x="175" y="57"/>
<use href="#sq" x="214" y="57"/>
<g fill="#0a3460" opacity="0.45" transform="translate(1.2,1.2)"><path d="M141 62.4H147V69H152V62.4H158.3V80H152V73.2H147V80H141z"/><path d="M178 62H185L189.5 74.5L194 62H200.5L192.8 80.4H186z"/><path d="M217.5 62H237V68.3H230.8V80.4H223.7V68.3H217.5z"/></g>
<g fill="#fff"><path d="M141 62.4H147V69H152V62.4H158.3V80H152V73.2H147V80H141z"/><path d="M178 62H185L189.5 74.5L194 62H200.5L192.8 80.4H186z"/><path d="M217.5 62H237V68.3H230.8V80.4H223.7V68.3H217.5z"/></g>
<!-- pulse icons -->
<use href="#sq" x="260" y="58"/>
<path d="M262 79.5H269.5V62.8H279V79.5H286" fill="none" stroke="#fafcff" stroke-width="2.2"/>
<use href="#sq" x="298" y="58"/>
<g fill="#fafcff"><rect x="305.5" y="61.5" width="12.5" height="2.5"/><rect x="301" y="78.5" width="8" height="2.5"/><rect x="315" y="78.5" width="8" height="2.5"/>
<rect x="306.5" y="66" width="2.5" height="2.5"/><rect x="306.5" y="70.5" width="2.5" height="2.5"/><rect x="306.5" y="75" width="2.5" height="2.5"/>
<rect x="315" y="66" width="2.5" height="2.5"/><rect x="315" y="70.5" width="2.5" height="2.5"/><rect x="315" y="75" width="2.5" height="2.5"/></g>
<!-- math -->
<use href="#sq" x="343.5" y="57.5"/>
<g stroke="#fafcff" stroke-width="2.4" fill="none"><path d="M347.5 66.4H355.5M351.5 62.5V70.5M360 66.4H368M348 73L355 80M355 73L348 80M360 76.6H368"/></g>
<g fill="#fafcff"><circle cx="364" cy="72.6" r="1.3"/><circle cx="364" cy="80.4" r="1.3"/></g>
<!-- R -->
<use href="#sq" x="382.5" y="57.5"/>
<path transform="translate(1.2,1.2)" opacity="0.45" fill="#0a3460" fill-rule="evenodd" d="M386.8 62.8H397.5Q404.3 62.8 404.3 68.4Q404.3 72.2 400.6 73.4L405.2 79.9H398.2L394.4 74.2H393V79.9H386.8zM393 67.2V70.2H396.6Q398.2 70.2 398.2 68.7Q398.2 67.2 396.6 67.2z"/>
<path fill="#fff" fill-rule="evenodd" d="M386.8 62.8H397.5Q404.3 62.8 404.3 68.4Q404.3 72.2 400.6 73.4L405.2 79.9H398.2L394.4 74.2H393V79.9H386.8zM393 67.2V70.2H396.6Q398.2 70.2 398.2 68.7Q398.2 67.2 396.6 67.2z"/>
<!-- cursor -->
<use href="#sq" x="426.5" y="57.5"/>
<g stroke="#a8d4f4" stroke-width="1" fill="none"><path d="M434.5 59V78M428 64.5H449"/></g>
<path d="M437.5 68.5L449 69.5L445.5 72.5L452 79L449 82L442.5 75.5L438.5 79.5z" fill="#fff" stroke="#1a4a78" stroke-width="0.6"/>
<!-- AUTO / play / pause balls -->
<g>
<circle cx="486.8" cy="71.8" r="14" fill="url(#gBall)"/>
<circle cx="526.5" cy="71.5" r="14" fill="url(#gBall)"/>
<circle cx="564.8" cy="71.8" r="14" fill="url(#gBall)"/>
<path d="M473 67A14 14 0 0 1 485 58L476 69z" fill="#d4e8f8" opacity="0.8"/>
<path d="M512.7 67A14 14 0 0 1 524.7 57.7L515.7 69z" fill="#d4e8f8" opacity="0.8"/>
<path d="M551 67A14 14 0 0 1 563 58L554 69z" fill="#d4e8f8" opacity="0.8"/>
</g>
<g font-family="Liberation Sans" font-weight="bold" fill="#fff" text-anchor="middle">
<text x="487.3" y="70" font-size="10.5" stroke="#fff" stroke-width="0.5">AU</text>
<text x="487.3" y="79.3" font-size="10.5" stroke="#fff" stroke-width="0.5">TO</text>
</g>
<path d="M523 65V78L533.5 71.5z" fill="#fff"/>
<rect x="559" y="65" width="3.6" height="12.4" fill="#fff"/><rect x="566" y="65" width="3.6" height="12.4" fill="#fff"/>
<!-- zoom -->
<g stroke="#585858" fill="none" stroke-linecap="round">
<circle cx="613.6" cy="68.5" r="9" stroke-width="3"/>
<path d="M606.5 75.5L596 82" stroke-width="3.4"/>
<path d="M609.5 68.5H617.7M613.6 64.4V72.6" stroke-width="2.6" stroke-linecap="butt"/>
<circle cx="652.7" cy="68.5" r="9" stroke-width="3"/>
<path d="M645.6 75.5L635 82" stroke-width="3.4"/>
<path d="M648.5 68.5H657" stroke-width="2.6" stroke-linecap="butt"/>
</g>
<circle cx="688" cy="71.5" r="14" fill="url(#gGray)"/>
<g fill="none" stroke="#f6f6f6" stroke-width="1.1" stroke-linejoin="miter">
<path d="M676 66L681.5 61.5V64.3H697V67.7H681.5V70.5z"/>
<path d="M699.5 75.5L694 71V73.8H678.5V77.2H694V80z"/>
</g>
</svg>
<!-- title icon -->
<svg class="a" style="left:8px;top:6px" width="16" height="18"><rect x="1" y="1" width="14" height="12" fill="#e8eaec"/><rect x="2.5" y="2.5" width="11" height="9" fill="#3c4a30"/><path d="M3 3h10v3H3z" fill="#7a8a64" opacity=".7"/><path d="M8 3v8M3 6.5h10" stroke="#7e8e66" stroke-width="1"/><rect x="1" y="14" width="14" height="1.4" fill="#1a1a1a"/><rect x="5" y="15.4" width="6" height="1.6" fill="#e0e0e0"/></svg>
<svg class="a" style="left:15px;top:30px" width="16" height="18"><rect x="1" y="1" width="14" height="12" fill="#d8dadc"/><rect x="2.5" y="2.5" width="11" height="9" fill="#3c4a30"/><path d="M3 3h10v3H3z" fill="#7a8a64" opacity=".7"/><path d="M8 3v8M3 6.5h10" stroke="#7e8e66" stroke-width="1"/><rect x="1" y="14" width="14" height="1.4" fill="#1a1a1a"/><rect x="5" y="15.4" width="6" height="1.4" fill="#c8c8c8"/></svg>
<!-- caption buttons -->
<div class="a" style="left:873px;top:1px;width:103px;height:20px;border:1px solid #3c3e44;border-radius:0 0 5px 5px;overflow:hidden;box-shadow:inset 0 1px rgba(255,255,255,.6);background:linear-gradient(#dadadc,#cacacc 45%,#a8a8ac 55%,#bcbcc0)">
 <div class="a" style="left:55px;top:0;width:47px;height:20px;background:linear-gradient(#e2a69c,#da8070 40%,#c8402c 55%,#d06048)"></div>
 <div class="a" style="left:27px;top:0;width:1px;height:20px;background:#3c3e44"></div>
 <div class="a" style="left:54px;top:0;width:1px;height:20px;background:#3c3e44"></div>
 <div class="a" style="left:8px;top:9px;width:12px;height:5px;background:#fff;border:1px solid #333"></div>
 <div class="a" style="left:35px;top:4px;width:12px;height:10px;background:#fff;border:1px solid #333"><div class="a" style="left:2px;top:2px;width:6px;height:4px;background:#888;border:1px solid #333"></div></div>
 <svg class="a" style="left:69px;top:2px" width="20" height="14"><path d="M6 3.5L14 11M14 3.5L6 11" stroke="#5a3a36" stroke-width="3.8"/><path d="M6 3.5L14 11M14 3.5L6 11" stroke="#fff" stroke-width="2.3"/></svg>
</div>
<!-- MDI buttons -->
<div class="a" style="left:918px;top:31px;width:18px;height:18px;border:1px solid #b4bcc8;background:linear-gradient(#f2f5fa,#e4e9f2)"><div class="a" style="left:4px;top:10px;width:7px;height:2px;background:#687280"></div></div>
<div class="a" style="left:937px;top:31px;width:18px;height:18px;border:1px solid #b4bcc8;background:linear-gradient(#f2f5fa,#e4e9f2)"><div class="a" style="left:7px;top:4px;width:6px;height:5px;border:1px solid #687280;border-top-width:2px"></div><div class="a" style="left:4px;top:7px;width:6px;height:5px;border:1px solid #687280;border-top-width:2px;background:#e8edf5"></div></div>
<div class="a" style="left:956px;top:31px;width:18px;height:18px;border:1px solid #b4bcc8;background:linear-gradient(#f2f5fa,#e4e9f2)"><svg class="a" style="left:4px;top:4px" width="10" height="10"><path d="M1.5 1.5L8.5 8.5M8.5 1.5L1.5 8.5" stroke="#687280" stroke-width="1.8"/></svg></div>
<svg class="a" style="left:960px;top:624px" width="12" height="12"><g fill="#b8b8b8"><rect x="8" y="0" width="2" height="2"/><rect x="8" y="4" width="2" height="2"/><rect x="4" y="4" width="2" height="2"/><rect x="8" y="8" width="2" height="2"/><rect x="4" y="8" width="2" height="2"/><rect x="0" y="8" width="2" height="2"/></g></svg>

<div class="t" style="left:28.7px;top:9px;font-size:12.5px;color:#101010;text-shadow:0 0 6px rgba(255,255,255,.5)">DSO-6000 - [Scope1]</div>
<div class="t" style="left:37.0px;top:33px;font-size:13px;color:#000;">File</div>
<div class="t" style="left:70.0px;top:33px;font-size:13px;color:#000;">View</div>
<div class="t" style="left:111.0px;top:33px;font-size:13px;color:#000;">Setup</div>
<div class="t" style="left:158.0px;top:33px;font-size:13px;color:#000;">Display</div>
<div class="t" style="left:214.0px;top:33px;font-size:13px;color:#000;">Cursor</div>
<div class="t" style="left:267.7px;top:33px;font-size:13px;color:#000;">Measure</div>
<div class="t" style="left:332.3px;top:33px;font-size:13px;color:#000;">Acquire</div>
<div class="t" style="left:390.0px;top:33px;font-size:13px;color:#000;">Utility</div>
<div class="t" style="left:436.3px;top:33px;font-size:13px;color:#000;">Window</div>
<div class="t" style="left:497.6px;top:33px;font-size:13px;color:#000;">Help</div>
<div class="t" style="left:15.5px;top:98px;font-size:15px;color:#3ae23a;transform:scaleX(0.965);transform-origin:0 0">Trapezia</div>
<div class="t" style="left:244.7px;top:100px;font-size:13px;color:#4ad8c4;">Frequency: 1000.000 Hz</div>
<div class="t" style="left:445.5px;top:100px;font-size:13px;color:#4ad8c4;letter-spacing:0.12px">V(Pk to Pk) : 4.000 V</div>
<div class="t" style="left:793.5px;top:102px;font-size:11px;color:#000;">Connect:</div>
<div class="t" style="left:901.4px;top:102px;font-size:11px;color:#000;">DDS:</div>
<div class="t" style="left:790.6px;top:126px;font-size:11px;color:#000;">DSO</div>
<div class="t" style="left:832.6px;top:124px;font-size:11px;color:#000;">DDS</div>
<div class="t" style="left:801.4px;top:157px;font-size:11px;color:#000;word-spacing:0px">On / Off</div>
<div class="t" style="left:870.6px;top:157px;font-size:11px;color:#000;">Single</div>
<div class="t" style="left:794.9px;top:183px;font-size:11px;color:#000;">Wave Type</div>
<div class="t" style="left:761.7px;width:120px;text-align:center;top:208px;font-size:11px;color:#000">Sine</div>
<div class="t" style="left:817.5px;width:120px;text-align:center;top:208px;font-size:11px;color:#000">Square</div>
<div class="t" style="left:875.5px;width:120px;text-align:center;top:208px;font-size:11px;color:#000">AM/FM</div>
<div class="t" style="left:761.5px;width:120px;text-align:center;top:243px;font-size:11px;color:#000">Ramp</div>
<div class="t" style="left:856.3px;top:243px;font-size:11px;color:#000;">Trapezia</div>
<div class="t" style="left:876px;width:120px;text-align:center;top:243px;font-size:11px;color:#000">Gause</div>
<div class="t" style="left:762px;width:120px;text-align:center;top:278px;font-size:11px;color:#000">Arb</div>
<div class="t" style="left:856.3px;top:278px;font-size:11px;color:#000;">Exponent</div>
<div class="t" style="left:875.5px;width:120px;text-align:center;top:278px;font-size:11px;color:#000">White</div>
<div class="t" style="left:794.3px;top:306px;font-size:11px;color:#000;">Parameter</div>
<div class="t" style="left:794.3px;top:326px;font-size:11px;color:#000;">Frequency</div>
<div class="t" style="left:849.0px;top:349px;font-size:11px;color:#000;">KHZ</div>
<div class="t" style="left:896.6px;top:350px;font-size:11px;color:#000;">(0 ~ 75MHz)</div>
<div class="t" style="left:791.6px;top:374px;font-size:11px;color:#000;">Amplitude</div>
<div class="t" style="left:876.3px;top:399px;font-size:11px;color:#000;">V</div>
<div class="t" style="left:893.3px;top:399px;font-size:11px;color:#000;">(0 ~ 3.5V )</div>
<div class="t" style="left:791.6px;top:427px;font-size:11px;color:#000;">Y Offset</div>
<div class="t" style="left:875.6px;top:452px;font-size:11px;color:#000;">V</div>
<div class="t" style="left:892.0px;top:452px;font-size:11px;color:#000;">(-7&nbsp; ~ 7V )</div>
<div class="t" style="left:794.9px;top:474px;font-size:11px;color:#000;">Phase</div>
<div class="t" style="left:873.6px;top:498px;font-size:11px;color:#000;">( 0.0 ~ 1.0)</div>
<div class="t" style="left:791.6px;top:528px;font-size:11px;color:#000;">Duty</div>
<div class="t" style="left:791.6px;top:556px;font-size:11px;color:#000;">Rise Duty</div>
<div class="t" style="left:846.5px;top:556px;font-size:11px;color:#000;">High Duty</div>
<div class="t" style="left:905.5px;top:556px;font-size:11px;color:#000;">Fall Duty</div>
<div class="t" style="left:797.0px;top:349px;font-size:13px;color:#e0892e;">1.000</div>
<div class="t" style="left:794.3px;top:398px;font-size:13px;color:#e0892e;">2.000</div>
<div class="t" style="left:794.9px;top:450px;font-size:13px;color:#e0892e;">0.000</div>
<div class="t" style="left:793.6px;top:497px;font-size:13px;color:#e0892e;">0.000</div>
<div class="t" style="left:793.2px;top:584px;font-size:13px;color:#e0892e;">0.200</div>
<div class="t" style="left:850.6px;top:584px;font-size:13px;color:#e0892e;">0.400</div>
<div class="t" style="left:907.6px;top:584px;font-size:13px;color:#e0892e;">0.200</div>
<div class="t" style="left:9.4px;top:623px;font-size:12.5px;color:#000;">Connected</div>
<div class="t" style="left:852.3px;top:623px;font-size:12.5px;color:#000;width:104px;overflow:hidden">23-05-2016&nbsp;&nbsp; 14:02</div>
</body></html>
